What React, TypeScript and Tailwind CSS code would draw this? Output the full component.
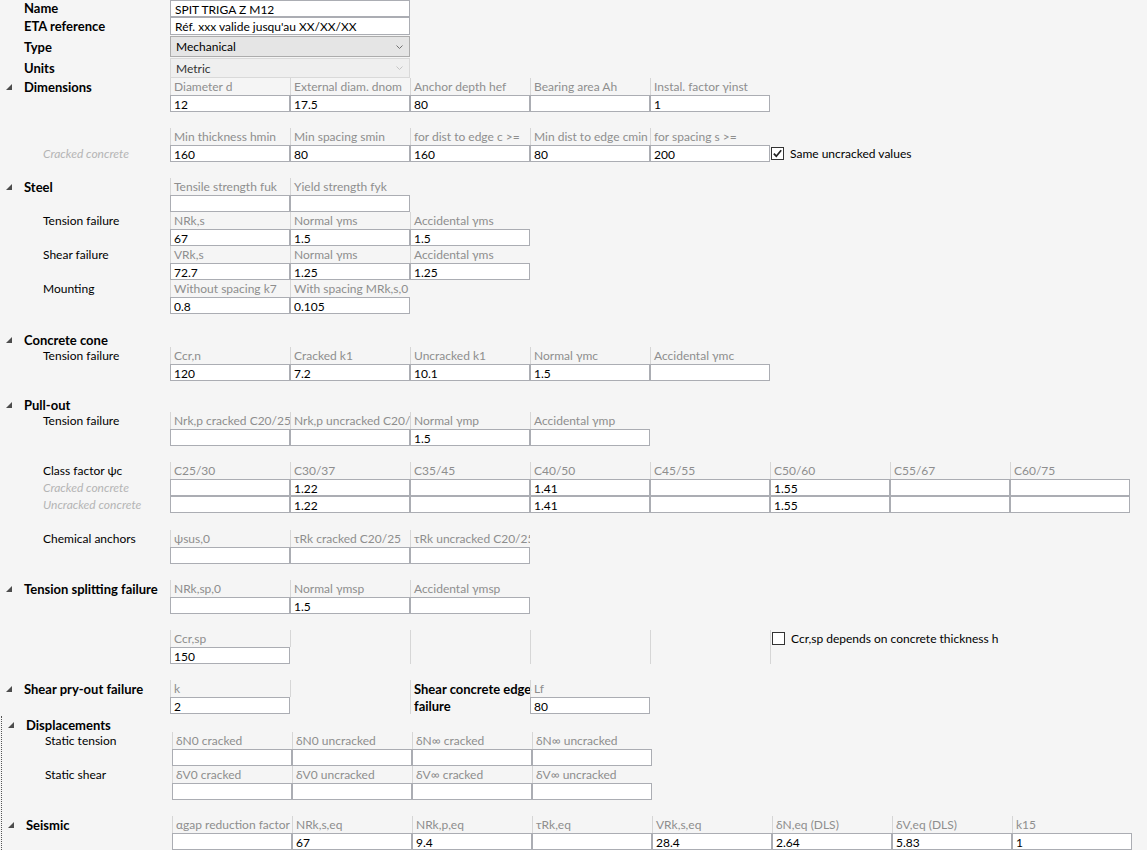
import React from 'react';

type Line = { t: string; k: 'sec' | 'sub' | 'hint' } | null;

const HDR =
  'h-[17px] w-[120px] shrink-0 border-l border-[#d6d6d6] pl-[3px] leading-[18px] text-[#8e8e8e] whitespace-nowrap overflow-hidden';
const BOX =
  'h-[17px] w-[120px] shrink-0 border border-[#abadb3] bg-white pl-[3px] pt-[1px] leading-[15px] text-black whitespace-nowrap overflow-hidden';

// small expander arrow (expanded state)
function Tri() {
  return (
    <svg width="6" height="6" viewBox="0 0 6 6" className="absolute left-[6px] top-[6px]">
      <polygon points="6,0 6,6 0,6" fill="#4d4d4d" />
    </svg>
  );
}

function SideLine({ l, h = 'h-[17px]' }: { l: Line; h?: string }) {
  if (!l) return <div className={h} />;
  if (l.k === 'sec')
    return (
      <div className={`relative ${h} leading-[18px] pl-[24px] font-bold text-[13px] whitespace-nowrap`}>
        <Tri />
        {l.t}
      </div>
    );
  if (l.k === 'sub') return <div className={`${h} leading-[18px] pl-[43px] whitespace-nowrap`}>{l.t}</div>;
  return <div className={`${h} leading-[18px] pl-[43px] italic text-[#b4b4b4] whitespace-nowrap`}>{l.t}</div>;
}

function Field({ h, v = [''] }: { h: string; v?: string[] }) {
  return (
    <div className="flex flex-col">
      <div className={HDR}>{h}</div>
      {v.map((x, i) => (
        <div key={i} className={BOX}>
          {x}
        </div>
      ))}
    </div>
  );
}

function Block({ lines, children, className = '' }: { lines: Line[]; children: React.ReactNode; className?: string }) {
  return (
    <div className={`flex ${className}`}>
      <div className="w-[170px] shrink-0 flex flex-col">
        {lines.map((l, i) => (
          <SideLine key={i} l={l} />
        ))}
      </div>
      <div className="flex">{children}</div>
    </div>
  );
}

function Check({ checked, label }: { checked?: boolean; label: string }) {
  return (
    <div className="flex items-center h-[17px] pl-[1px] whitespace-nowrap">
      <div className="w-[13px] h-[13px] border border-[#333333] bg-white flex items-center justify-center">
        {checked && (
          <svg width="11" height="11" viewBox="0 0 11 11">
            <path d="M1.8 5.6 L4.3 8.2 L9.2 2.2" fill="none" stroke="#222222" strokeWidth="1.7" />
          </svg>
        )}
      </div>
      <span className="ml-[6px] leading-[18px]">{label}</span>
    </div>
  );
}

function Chevron({ color }: { color: string }) {
  return (
    <svg width="7" height="4" viewBox="0 0 7 4" className="mr-[6px]">
      <polyline points="0.5,0.5 3.5,3.5 6.5,0.5" fill="none" stroke={color} strokeWidth="1" />
    </svg>
  );
}

const sec = (t: string): Line => ({ t, k: 'sec' });
const sub = (t: string): Line => ({ t, k: 'sub' });
const hint = (t: string): Line => ({ t, k: 'hint' });

export default function App() {
  return (
    <div className="w-[1147px] h-[850px] overflow-hidden bg-[#f5f5f5] text-[12px] text-black font-['Lato',sans-serif]">
      {/* General */}
      <div className="flex h-[17px]">
        <div className="w-[170px] shrink-0 pl-[24px] font-bold text-[13px] leading-[17px]">Name</div>
        <div className="w-[240px] h-[17px] border border-[#abadb3] bg-white pl-[4px] pt-[1px] leading-[15px]">SPIT TRIGA Z M12</div>
      </div>
      <div className="flex h-[18px]">
        <div className="w-[170px] shrink-0 pl-[24px] font-bold text-[13px] leading-[19px]">ETA reference</div>
        <div className="w-[240px] h-[18px] border border-[#abadb3] bg-white pl-[4px] pt-[1px] leading-[16px]">
          Réf. xxx valide jusqu'au XX/XX/XX
        </div>
      </div>
      <div className="flex h-[21px] mt-[1px]">
        <div className="w-[170px] shrink-0 pl-[24px] font-bold text-[13px] leading-[22px]">Type</div>
        <div className="w-[240px] h-[21px] border border-[#acacac] bg-[#e5e5e5] pl-[5px] flex items-center justify-between">
          <span className="pt-[1px]">Mechanical</span>
          <Chevron color="#707070" />
        </div>
      </div>
      <div className="flex h-[20px] mt-[1px]">
        <div className="w-[170px] shrink-0 pl-[24px] font-bold text-[13px] leading-[21px]">Units</div>
        <div className="w-[240px] h-[20px] border border-[#d9d9d9] bg-[#efefef] pl-[5px] flex items-center justify-between text-[#333333]">
          <span className="pt-[1px]">Metric</span>
          <Chevron color="#c4c4c4" />
        </div>
      </div>

      {/* Dimensions */}
      <Block lines={[sec('Dimensions'), null]}>
        <Field h="Diameter d" v={['12']} />
        <Field h="External diam. dnom" v={['17.5']} />
        <Field h="Anchor depth hef" v={['80']} />
        <Field h="Bearing area Ah" />
        <Field h="Instal. factor γinst" v={['1']} />
      </Block>
      <Block lines={[null, hint('Cracked concrete')]} className="mt-[16px]">
        <Field h="Min thickness hmin" v={['160']} />
        <Field h="Min spacing smin" v={['80']} />
        <Field h="for dist to edge c >=" v={['160']} />
        <Field h="Min dist to edge cmin" v={['80']} />
        <Field h="for spacing s >=" v={['200']} />
        <div className="flex flex-col">
          <div className="h-[17px]" />
          <Check checked label="Same uncracked values" />
        </div>
      </Block>

      {/* Steel */}
      <Block lines={[sec('Steel'), null]} className="mt-[16px]">
        <Field h="Tensile strength fuk" />
        <Field h="Yield strength fyk" />
      </Block>
      <Block lines={[sub('Tension failure'), null]}>
        <Field h="NRk,s" v={['67']} />
        <Field h="Normal γms" v={['1.5']} />
        <Field h="Accidental γms" v={['1.5']} />
      </Block>
      <Block lines={[sub('Shear failure'), null]}>
        <Field h="VRk,s" v={['72.7']} />
        <Field h="Normal γms" v={['1.25']} />
        <Field h="Accidental γms" v={['1.25']} />
      </Block>
      <Block lines={[sub('Mounting'), null]}>
        <Field h="Without spacing k7" v={['0.8']} />
        <Field h="With spacing MRk,s,0" v={['0.105']} />
      </Block>

      {/* Concrete cone */}
      <div className="mt-[17px]">
        <SideLine l={sec('Concrete cone')} h="h-[16px]" />
      </div>
      <Block lines={[sub('Tension failure'), null]}>
        <Field h="Ccr,n" v={['120']} />
        <Field h="Cracked k1" v={['7.2']} />
        <Field h="Uncracked k1" v={['10.1']} />
        <Field h="Normal γmc" v={['1.5']} />
        <Field h="Accidental γmc" />
      </Block>

      {/* Pull-out */}
      <div className="mt-[15px]">
        <SideLine l={sec('Pull-out')} h="h-[16px]" />
      </div>
      <Block lines={[sub('Tension failure'), null]}>
        <Field h="Nrk,p cracked C20/25" />
        <Field h="Nrk,p uncracked C20/25" />
        <Field h="Normal γmp" v={['1.5']} />
        <Field h="Accidental γmp" />
      </Block>
      <Block lines={[sub('Class factor ψc'), hint('Cracked concrete'), hint('Uncracked concrete')]} className="mt-[16px]">
        <Field h="C25/30" v={['', '']} />
        <Field h="C30/37" v={['1.22', '1.22']} />
        <Field h="C35/45" v={['', '']} />
        <Field h="C40/50" v={['1.41', '1.41']} />
        <Field h="C45/55" v={['', '']} />
        <Field h="C50/60" v={['1.55', '1.55']} />
        <Field h="C55/67" v={['', '']} />
        <Field h="C60/75" v={['', '']} />
      </Block>
      <Block lines={[sub('Chemical anchors'), null]} className="mt-[17px]">
        <Field h="ψsus,0" />
        <Field h="τRk cracked C20/25" />
        <Field h="τRk uncracked C20/25" />
      </Block>

      {/* Tension splitting */}
      <Block lines={[sec('Tension splitting failure'), null]} className="mt-[16px]">
        <Field h="NRk,sp,0" />
        <Field h="Normal γmsp" v={['1.5']} />
        <Field h="Accidental γmsp" />
      </Block>
      <Block lines={[null, null]} className="mt-[16px]">
        <Field h="Ccr,sp" v={['150']} />
        <div className="w-[120px] h-[17px] border-l border-[#d6d6d6]" />
        <div className="w-[120px] h-[34px] border-l border-[#d6d6d6]" />
        <div className="w-[120px] h-[34px] border-l border-[#d6d6d6]" />
        <div className="w-[120px] h-[34px] border-l border-[#d6d6d6]" />
        <div className="h-[34px] border-l border-[#d6d6d6]">
          <Check label="Ccr,sp depends on concrete thickness h" />
        </div>
      </Block>

      {/* Shear pry-out */}
      <Block lines={[sec('Shear pry-out failure'), null]} className="mt-[16px]">
        <Field h="k" v={['2']} />
        <div className="w-[120px] h-[17px] border-l border-[#d6d6d6]" />
        <div className="w-[120px] h-[34px] border-l border-[#d6d6d6] pl-[3px] font-bold text-[13px] leading-[17px] pt-[1px] whitespace-nowrap">
          <div>Shear concrete edge</div>
          <div>failure</div>
        </div>
        <Field h="Lf" v={['80']} />
      </Block>

      {/* Displacements + Seismic */}
      <div className="mt-[2px] ml-[1px] border-l border-dotted border-[#555555] pb-[40px]">
        <SideLine l={sec('Displacements')} h="h-[16px]" />
        <Block lines={[sub('Static tension'), null]}>
          <Field h="δN0 cracked" />
          <Field h="δN0 uncracked" />
          <Field h="δN∞ cracked" />
          <Field h="δN∞ uncracked" />
        </Block>
        <Block lines={[sub('Static shear'), null]}>
          <Field h="δV0 cracked" />
          <Field h="δV0 uncracked" />
          <Field h="δV∞ cracked" />
          <Field h="δV∞ uncracked" />
        </Block>
        <Block lines={[sec('Seismic'), null]} className="mt-[16px]">
          <Field h="αgap reduction factor" />
          <Field h="NRk,s,eq" v={['67']} />
          <Field h="NRk,p,eq" v={['9.4']} />
          <Field h="τRk,eq" />
          <Field h="VRk,s,eq" v={['28.4']} />
          <Field h="δN,eq (DLS)" v={['2.64']} />
          <Field h="δV,eq (DLS)" v={['5.83']} />
          <Field h="k15" v={['1']} />
        </Block>
      </div>
    </div>
  );
}
